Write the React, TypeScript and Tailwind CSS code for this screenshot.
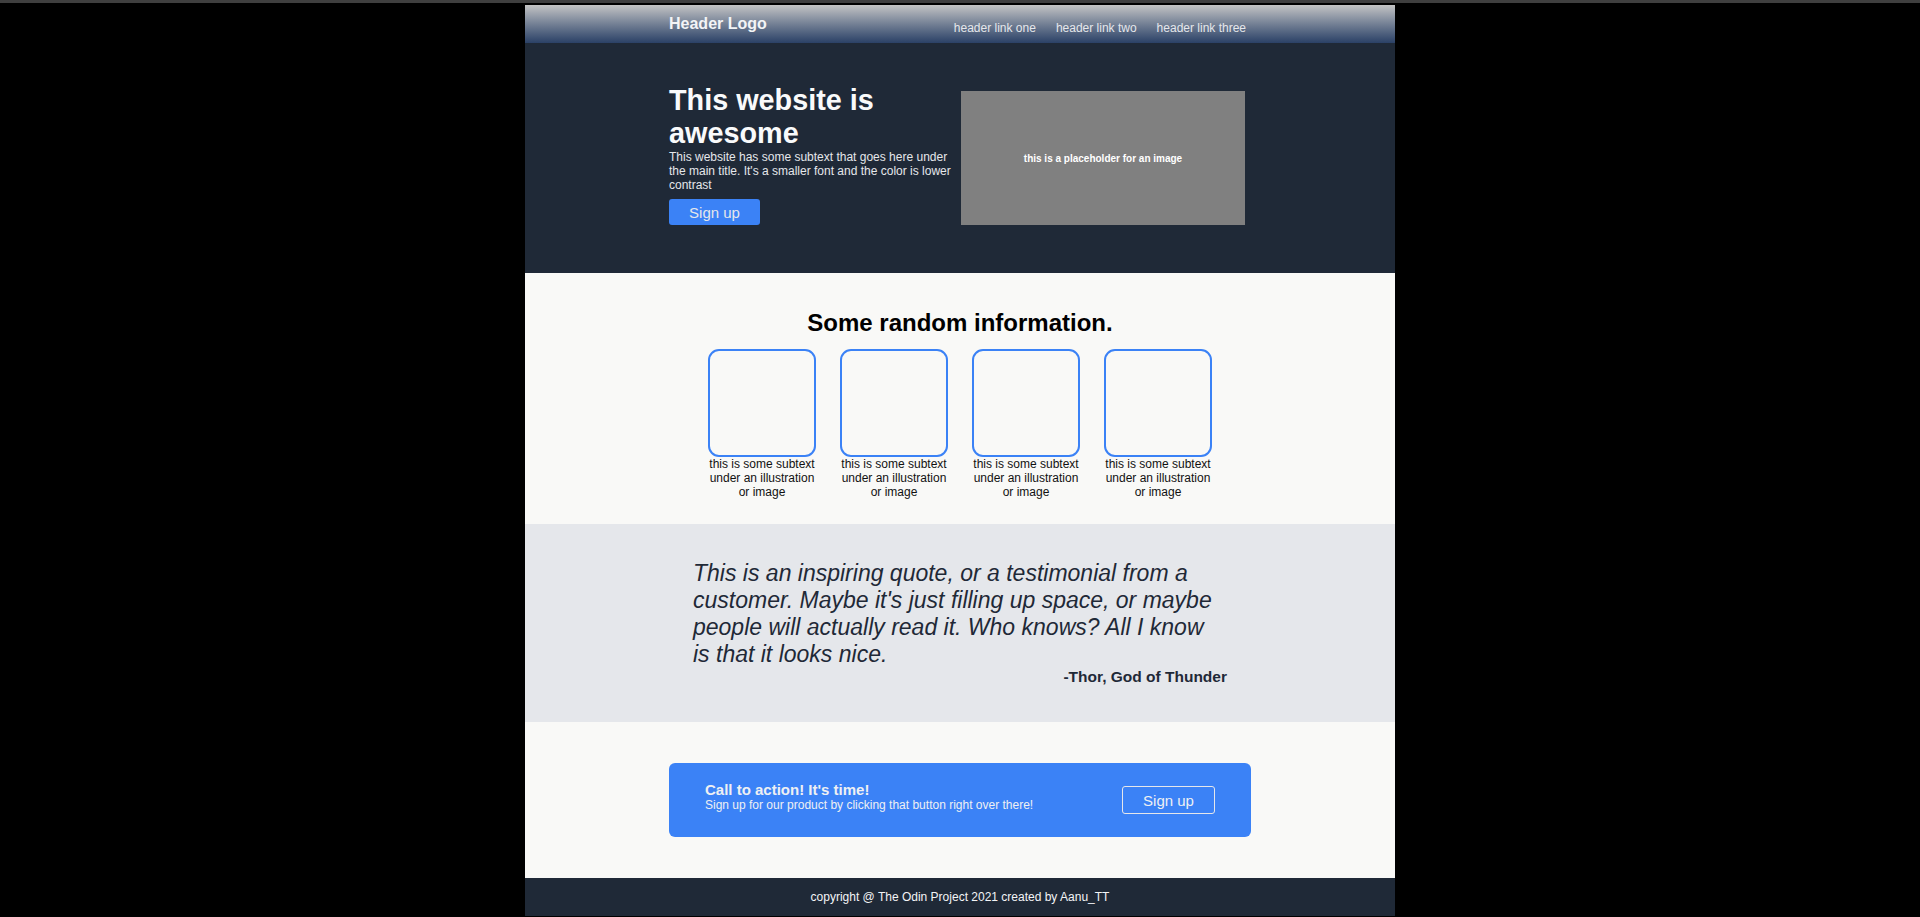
export default function App() {
  const cards = [1, 2, 3, 4]

  return (
    <div className="min-h-screen bg-black font-['Liberation_Sans',Arial,sans-serif] leading-[normal]">
      {/* browser strip */}
      <div className="h-[3px] bg-[#3f3f3f]"></div>

      <div className="mx-auto mt-[2px] w-[870px]">
        {/* HEADER */}
        <header className="h-[38px] bg-linear-to-b from-[#c4c4c4] to-[#2b4166]">
          <div className="mx-auto flex w-[582px] items-start justify-between">
            <div className="pt-[10px] text-[16px] font-bold text-[#f3f4f6]">Header Logo</div>
            <nav className="mr-[5px] flex gap-[20px] pt-[16px] text-[12px] text-[#e5e7eb]">
              <a>header link one</a>
              <a>header link two</a>
              <a>header link three</a>
            </nav>
          </div>
        </header>

        {/* HERO */}
        <section className="bg-[#1f2937] pt-[41px] pb-[48px]">
          <div className="mx-auto flex w-[582px] items-end justify-between">
            <div className="w-[288px]">
              <h1 className="text-[28.8px] font-bold text-[#f9fafb]">This website is awesome</h1>
              <p className="text-[12px] text-[#e5e7eb]">
                This website has some subtext that goes here under the main title. It's a smaller font and the color
                is lower contrast
              </p>
              <button className="mt-[7px] h-[26px] w-[91px] rounded-[3px] bg-[#3b82f6] text-[15px] text-[#e5e7eb]">
                Sign up
              </button>
            </div>
            <div className="mr-[6px] flex h-[134px] w-[284px] items-center justify-center bg-[#808080] text-[10px] font-bold text-white">
              this is a placeholder for an image
            </div>
          </div>
        </section>

        {/* INFO */}
        <section className="bg-[#f9f9f7] pt-[36px] pb-[25px]">
          <h2 className="mb-[12px] text-center text-[24px] font-bold text-black">Some random information.</h2>
          <div className="flex justify-center gap-[24px]">
            {cards.map((c) => (
              <div key={c} className="w-[108px]">
                <div className="h-[108px] w-[108px] rounded-[11px] border-2 border-[#3b82f6]"></div>
                <p className="text-center text-[12px] text-[#111111]">this is some subtext under an illustration or image</p>
              </div>
            ))}
          </div>
        </section>

        {/* QUOTE */}
        <section className="bg-[#e5e7eb] pt-[36px] pb-[36px]">
          <div className="mx-auto w-[534px] text-[#1f2937]">
            <p className="w-[526px] text-[23px] leading-[27px] italic">
              This is an inspiring quote, or a testimonial from a customer. Maybe it's just filling up space, or maybe
              people will actually read it. Who knows? All I know is that it looks nice.
            </p>
            <p className="text-right text-[15.5px] font-bold">-Thor, God of Thunder</p>
          </div>
        </section>

        {/* CTA */}
        <section className="bg-[#f9f9f7] pt-[41px] pb-[41px]">
          <div className="mx-auto flex h-[74px] w-[582px] items-center justify-between rounded-[6px] bg-[#3b82f6] px-[36px]">
            <div className="pb-[8px] text-[#eef0f3]">
              <h3 className="text-[15px] font-bold">Call to action! It's time!</h3>
              <p className="text-[12px]">Sign up for our product by clicking that button right over there!</p>
            </div>
            <button className="h-[28px] w-[93px] rounded-[3px] border border-[#e5e7eb] text-[15px] text-[#eef0f3]">
              Sign up
            </button>
          </div>
        </section>

        {/* FOOTER */}
        <footer className="flex h-[38px] items-center justify-center bg-[#1f2937] text-[12px] text-[#f3f4f6]">
          copyright @ The Odin Project 2021 created by Aanu_TT
        </footer>
      </div>
    </div>
  )
}
